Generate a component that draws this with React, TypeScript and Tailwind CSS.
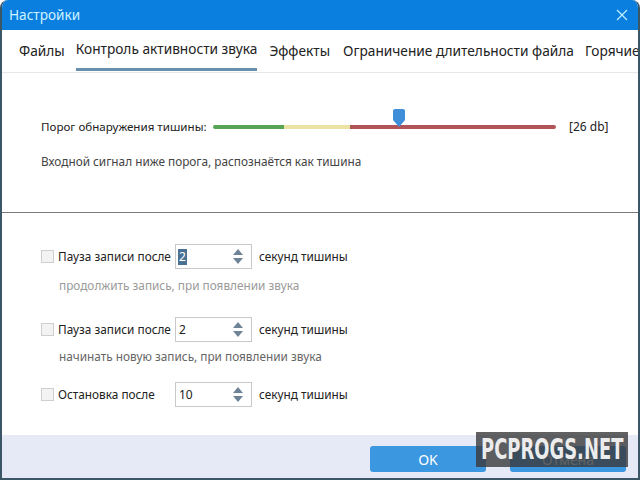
import React from "react";

const uiFont = { fontFamily: '"Noto Sans", "Open Sans", sans-serif' };
const bodyFont = { fontFamily: '"Noto Sans", "Open Sans", sans-serif' };

function Spin({ value, selected }: { value: string; selected?: boolean }) {
  return (
    <div className="flex h-[25px] w-[77px] items-center border border-[#c9c9c9] bg-white pl-[2px] pr-[8px]">
      <span
        className={
          selected
            ? "bg-[#4a7193] px-[1px] text-[12px] leading-[16px] text-white"
            : "px-[1px] text-[12px] leading-[16px] text-[#222]"
        }
      >
        {value}
      </span>
      <div className="ml-auto flex flex-col items-center gap-[3px]">
        <svg width="10" height="6" viewBox="0 0 10 6">
          <path d="M0 6 L5 0 L10 6 Z" fill="#6e8496" />
        </svg>
        <svg width="10" height="6" viewBox="0 0 10 6">
          <path d="M0 0 L10 0 L5 6 Z" fill="#6e8496" />
        </svg>
      </div>
    </div>
  );
}

function Row({ label, value, selected }: { label: string; value: string; selected?: boolean }) {
  return (
    <div className="flex h-[25px] items-center">
      <div className="ml-[39px] h-[13px] w-[13px] border border-[#cfcfcf] bg-[#f3f3f3]" />
      <span className="ml-[4px] w-[117px] whitespace-nowrap text-[11.8px] text-[#222]">{label}</span>
      <Spin value={value} selected={selected} />
      <span className="ml-[7px] whitespace-nowrap text-[11.8px] text-[#222]">секунд тишины</span>
    </div>
  );
}

export default function App() {
  return (
    <div className="relative h-[480px] w-[640px] overflow-hidden bg-white">
      <div className="flex h-[480px] w-[640px] flex-col overflow-hidden rounded-t-[8px] border-x-2 border-b-2 border-[#3b5767] bg-white">
        {/* title bar */}
        <div className="-mx-[2px] flex h-[30px] shrink-0 items-center bg-[#0b7fe0] pl-[9px] pr-[12px]" style={uiFont}>
          <span className="text-[13.6px] text-[#cdf3ff]">Настройки</span>
          <svg className="ml-auto" width="12" height="12" viewBox="0 0 12 12">
            <path d="M1 1 L11 11 M11 1 L1 11" stroke="#bff0ff" strokeWidth="1.2" />
          </svg>
        </div>

        {/* tabs */}
        <div className="flex h-[43px] shrink-0 items-stretch whitespace-nowrap border-b border-[#e6e6e6] pl-[17px] text-[13.7px] text-[#222]" style={uiFont}>
          <div className="flex items-center">Файлы</div>
          <div className="ml-[11px] flex flex-col">
            <div className="flex flex-1 items-center">Контроль активности звука</div>
            <div className="mb-[1px] h-[3px] bg-[#6a8fad]" />
          </div>
          <div className="ml-[12px] flex items-center">Эффекты</div>
          <div className="ml-[13px] flex items-center">Ограничение длительности файла</div>
          <div className="ml-[11px] flex items-center">Горячие</div>
        </div>

        {/* threshold section */}
        <div className="h-[140px] shrink-0 border-b border-[#7a7a7a] pt-[44px]" style={bodyFont}>
          <div className="flex h-[20px] items-center pl-[39px]">
            <span className="w-[172px] whitespace-nowrap text-[11.6px] text-[#222]">Порог обнаружения тишины:</span>
            <div className="relative flex h-[20px] w-[343px] items-center">
              <div className="flex h-[4px] w-full overflow-hidden rounded-full">
                <div className="w-[71px] bg-[#57a457]" />
                <div className="w-[66px] bg-[#ece3a2]" />
                <div className="flex-1 bg-[#b05457]" />
              </div>
              <svg className="absolute left-[180px] top-[-8px]" width="12" height="18" viewBox="0 0 12 18">
                <path d="M2 0 H10 Q12 0 12 2 V11 L6 18 L0 11 V2 Q0 0 2 0 Z" fill="#3f8ed8" />
              </svg>
            </div>
            <span className="ml-[13px] text-[12px] text-[#222]">[26 db]</span>
          </div>
          <div className="mt-[16px] pl-[39px] text-[11.8px] text-[#444]">
            Входной сигнал ниже порога, распознаётся как тишина
          </div>
        </div>

        {/* silence actions */}
        <div className="flex-1 pt-[31px]" style={bodyFont}>
          <Row label="Пауза записи после" value="2" selected />
          <div className="mt-[8px] pl-[57px] text-[11.8px] leading-[17px] text-[#9a9a9a]">
            продолжить запись, при появлении звука
          </div>
          <div className="mt-[23px]">
            <Row label="Пауза записи после" value="2" />
          </div>
          <div className="mt-[6px] pl-[57px] text-[11.8px] leading-[17px] text-[#666]">
            начинать новую запись, при появлении звука
          </div>
          <div className="mt-[17px]">
            <Row label="Остановка после" value="10" />
          </div>
        </div>

        {/* footer */}
        <div className="flex h-[43px] shrink-0 items-start justify-end gap-[24px] bg-[#e6eaf7] pr-[12px] pt-[11px]" style={uiFont}>
          <button className="h-[26px] w-[116px] rounded-[3px] bg-[#3c97e1] text-[14px] text-white">OK</button>
          <button className="h-[26px] w-[116px] rounded-[3px] bg-[#3c97e1] text-[14px] text-white">Отмена</button>
        </div>
      </div>

      {/* site stamp */}
      <div className="absolute left-[476px] top-[432px] flex h-[35px] w-[152px] items-center justify-center overflow-hidden bg-[#3a3a3a]/80">
        <span
          className="inline-block scale-x-[0.64] whitespace-nowrap text-[28px] font-bold leading-none text-[#ececec]"
          style={{ fontFamily: '"DejaVu Sans", sans-serif' }}
        >
          PCPROGS.NET
        </span>
      </div>
    </div>
  );
}
